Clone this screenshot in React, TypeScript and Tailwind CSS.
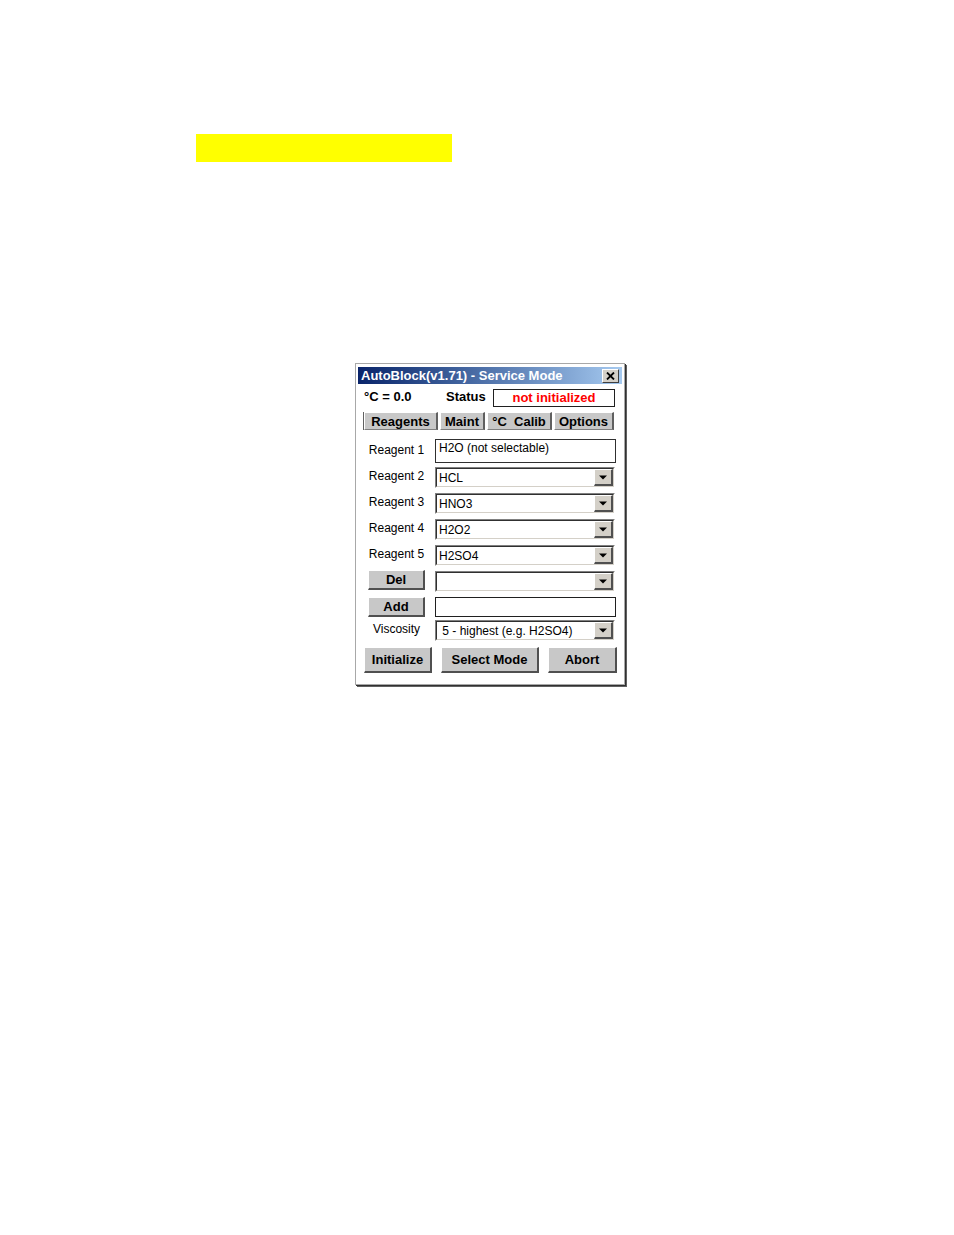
import React from "react";

const font = { fontFamily: '"Liberation Sans", Arial, sans-serif' };

function Arrow() {
  return (
    <div className="w-[19px] h-[17px] bg-[#d4d0c8] border-t border-l border-t-white border-l-white border-r-2 border-b-2 border-r-[#505050] border-b-[#505050] flex items-center justify-center">
      <svg width="8" height="5" viewBox="0 0 8 5">
        <path d="M0 0.5 H8 L4 4.5 Z" fill="#000" />
      </svg>
    </div>
  );
}

function Combo({ text }: { text: string }) {
  return (
    <div className="w-[180px] h-[21px] border-t border-l border-t-[#808080] border-l-[#808080] border-r border-b border-r-white border-b-white">
      <div className="w-full h-full bg-white border-t border-l border-t-[#303030] border-l-[#303030] border-r border-b border-r-[#d4d0c8] border-b-[#d4d0c8] flex items-center justify-between">
        <span className="pl-[2px] text-[12px] text-black leading-none whitespace-pre">{text}</span>
        <Arrow />
      </div>
    </div>
  );
}

function Btn({ label, w, h = "h-[20px]" }: { label: string; w: string; h?: string }) {
  return (
    <div
      className={`${w} ${h} bg-[#c8c8c8] border-t border-l border-t-white border-l-white border-r-2 border-b-2 border-r-[#505050] border-b-[#505050] flex items-center justify-center text-[13px] font-bold text-black leading-none`}
    >
      {label}
    </div>
  );
}

function Label({ text }: { text: string }) {
  return <div className="w-[65px] text-center text-[12px] text-black leading-none">{text}</div>;
}

function Tab({ label, w }: { label: string; w: string }) {
  return (
    <div
      className={`${w} h-[18px] bg-[#c8c8c8] border-t border-t-white border-l border-l-white border-r-2 border-r-[#606060] border-b border-b-[#808080] flex items-center justify-center text-[13px] font-bold text-black leading-none whitespace-pre`}
    >
      {label}
    </div>
  );
}

export default function App() {
  return (
    <div className="w-[954px] h-[1235px] bg-white" style={font}>
      <div className="pt-[134px] pl-[196px]">
        <div className="w-[256px] h-[28px] bg-[#ffff00]" />
      </div>
      <div className="mt-[201px] ml-[355px] w-[270px] h-[322px] bg-white border border-[#a8a8a8] shadow-[1px_1px_0_#303030,2px_2px_0_#606060]">
        {/* title bar */}
        <div className="mt-[3px] mx-[2px] h-[17px] bg-gradient-to-r from-[#0a246a] to-[#a6caf0] flex items-center justify-between pl-[3px] pr-[3px]">
          <span className="text-white text-[13px] font-bold leading-none">AutoBlock(v1.71) - Service Mode</span>
          <div className="w-[17px] h-[14px] bg-[#d4d0c8] border-t border-l border-t-white border-l-white border-r border-b border-r-[#404040] border-b-[#404040] flex items-center justify-center">
            <svg width="9" height="8" viewBox="0 0 9 8">
              <path d="M1 0.5 L8 7.5 M8 0.5 L1 7.5" stroke="#000" strokeWidth="1.8" />
            </svg>
          </div>
        </div>
        {/* status row */}
        <div className="mt-[5px] h-[18px] flex items-center pl-[8px]">
          <span className="w-[82px] text-[13px] font-bold text-black leading-none -mt-[3px]">°C = 0.0</span>
          <span className="w-[47px] text-[13px] font-bold text-black leading-none -mt-[3px]">Status</span>
          <div className="w-[122px] h-[18px] border border-[#202020] flex items-center justify-center text-[13px] font-bold text-[#ff0000] leading-none pb-[2px]">
            not initialized
          </div>
        </div>
        {/* tabs */}
        <div className="mt-[5px] ml-[7px] flex gap-[2px] border-l border-l-[#606060]">
          <Tab label="Reagents" w="w-[74px]" />
          <Tab label="Maint" w="w-[45px]" />
          <Tab label="°C  Calib" w="w-[65px]" />
          <Tab label="Options" w="w-[60px]" />
        </div>
        {/* reagent 1 */}
        <div className="mt-[9px] flex pl-[8px] gap-[6px]">
          <div className="pt-[5px]">
            <Label text="Reagent 1" />
          </div>
          <div className="w-[181px] h-[24px] border border-[#303030] pl-[3px] pt-[1px] text-[12px] text-black leading-[14px]">
            H2O (not selectable)
          </div>
        </div>
        {/* combos */}
        {[
          ["Reagent 2", "HCL", "mt-[4px]"],
          ["Reagent 3", "HNO3", "mt-[5px]"],
          ["Reagent 4", "H2O2", "mt-[5px]"],
          ["Reagent 5", "H2SO4", "mt-[5px]"],
        ].map(([l, t, m]) => (
          <div key={l} className={`${m} flex items-start pl-[8px] gap-[6px]`}>
            <div className="pt-[3px]">
              <Label text={l} />
            </div>
            <Combo text={t} />
          </div>
        ))}
        <div className="mt-[5px] flex items-start pl-[8px] gap-[6px]">
          <div className="w-[65px] flex justify-center -mt-[1px]">
            <Btn label="Del" w="w-[57px]" />
          </div>
          <Combo text="" />
        </div>
        <div className="mt-[5px] flex items-center pl-[8px] gap-[6px]">
          <div className="w-[65px] flex justify-center">
            <Btn label="Add" w="w-[57px]" />
          </div>
          <div className="w-[181px] h-[20px] border border-[#202020] bg-white" />
        </div>
        <div className="mt-[3px] flex items-start pl-[8px] gap-[6px]">
          <div className="pt-[3px]">
            <Label text="Viscosity" />
          </div>
          <Combo text=" 5 - highest (e.g. H2SO4)" />
        </div>
        {/* bottom buttons */}
        <div className="mt-[6px] flex pl-[8px] gap-[9px]">
          <Btn label="Initialize" w="w-[68px]" h="h-[26px]" />
          <Btn label="Select Mode" w="w-[98px]" h="h-[26px]" />
          <Btn label="Abort" w="w-[69px]" h="h-[26px]" />
        </div>
      </div>
    </div>
  );
}
